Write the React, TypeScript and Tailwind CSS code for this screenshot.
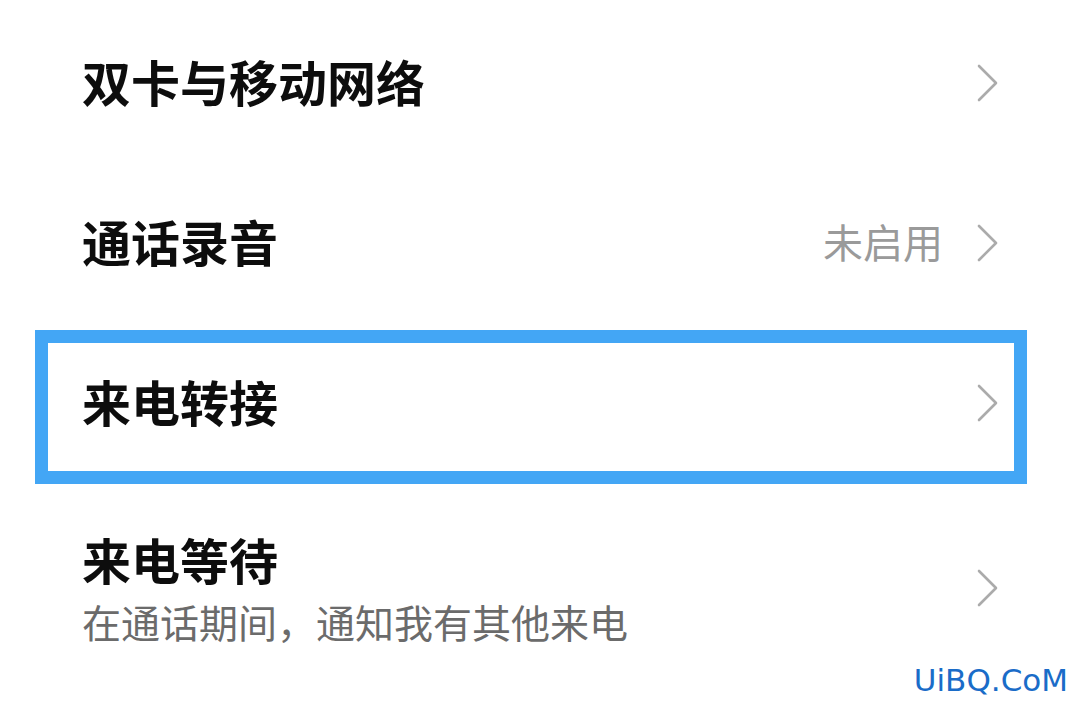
import React from 'react';

type Row = {
  title: string;
  value?: string;
  subtitle?: string;
  highlighted?: boolean;
};

const rows: Row[] = [
  { title: '双卡与移动网络' },
  { title: '通话录音', value: '未启用' },
  { title: '来电转接', highlighted: true },
  { title: '来电等待', subtitle: '在通话期间，通知我有其他来电' },
];

const Chevron = () => (
  <svg width="22" height="38" viewBox="0 0 22 38" className="shrink-0">
    <polyline
      points="2,2 19,19 2,36"
      fill="none"
      stroke="#ababab"
      strokeWidth="2.6"
      strokeLinecap="round"
      strokeLinejoin="round"
    />
  </svg>
);

const font = { fontFamily: '"Noto Sans CJK SC", "Noto Sans", sans-serif' };

export default function App() {
  return (
    <div className="relative h-[705px] w-[1080px] overflow-hidden bg-white pt-[3px]" style={font}>
      {rows.map((row, i) => {
        if (row.subtitle) {
          // last row: title + description, chevron centered on both
          return (
            <div key={i} className="flex items-center justify-between pl-[82px] pr-[81px] pt-[51px]">
              <div className="flex flex-col gap-[19px]">
                <p className="text-[49px] font-semibold leading-none text-[#0d0d0d]">{row.title}</p>
                <p className="text-[39px] leading-none text-[#6b6b6b]">{row.subtitle}</p>
              </div>
              <Chevron />
            </div>
          );
        }
        return (
          <div key={i} className="relative flex h-[160px] items-center justify-between pl-[82px] pr-[81px]">
            <p className="pb-[6px] text-[49px] font-semibold leading-none text-[#0d0d0d]">{row.title}</p>
            <div className="flex items-center gap-[34px]">
              {row.value && <span className="pb-[4px] text-[40px] leading-none text-[#9a9a9a]">{row.value}</span>}
              <Chevron />
            </div>
            {row.highlighted && (
              <div className="pointer-events-none absolute left-[35px] right-[53px] top-[7px] bottom-[-1px] border-[13px] border-[#43a6f5]" />
            )}
          </div>
        );
      })}

      {/* watermark */}
      <span
        className="absolute bottom-[9px] right-[12px] text-[31px] leading-none text-[#1a6cc8]"
        style={{ fontFamily: '"DejaVu Sans", sans-serif' }}
      >
        UiBQ.CoM
      </span>
    </div>
  );
}
